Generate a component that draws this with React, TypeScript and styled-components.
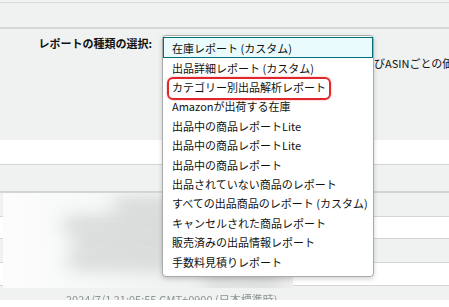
import styled, { createGlobalStyle } from "styled-components";

const GlobalStyle = createGlobalStyle`
    html, body {
        margin: 0;
        padding: 0;
        background: #ffffff;
    }
    body {
        font-family: "Noto Sans CJK JP", "Noto Sans", sans-serif;
        color: #0f1111;
        font-size: 11px;
    }
`

const Page = styled.div`
    position: relative;
    width: 449px;
    height: 307px;
    overflow: hidden;
    background: #ffffff;
`

const TopStrip = styled.div`
    height: 2px;
    background: #f3f3f3;
    border-bottom: 1px solid #d9dbdb;
`

const SubNav = styled.div`
    height: 24px;
    background: #f0f1f1;
    border-bottom: 2px solid #d6d8d8;
`

const Panel = styled.div`
    display: grid;
    grid-template-columns: 162px 212px 1fr;
    height: 104px;
    padding-top: 7px;
    background: #f0f1f1;
`

const Label = styled.div`
    text-align: right;
    padding-right: 10px;
    font-weight: bold;
    line-height: 14px;
    white-space: nowrap;
`

const SelectSlot = styled.div`
    height: 22px;
`

const Description = styled.div`
    padding-top: 20px;
    line-height: 14px;
    white-space: nowrap;
    overflow: hidden;
`

const Band = styled.div<{ $h: number; $gray?: boolean; $line?: number }>`
    display: flex;
    align-items: center;
    height: ${({ $h }) => $h}px;
    background: ${({ $gray }) => ($gray ? "#f0f1f1" : "#ffffff")};
    border-bottom: ${({ $line }) => $line ?? 1}px solid #d3d6d6;
    overflow: hidden;
`

const LastText = styled.span`
    align-self: flex-start;
    margin: 6px 0 0 66px;
    line-height: 14px;
    white-space: nowrap;
    color: #8f9494;
    filter: blur(0.6px);
`

const Blur = styled.div`
    position: absolute;
    left: 3px;
    top: 193px;
    width: 290px;
    height: 95px;
    overflow: hidden;
    display: flex;
    flex-direction: column;
    gap: 6px;
    padding-top: 8px;
    box-sizing: border-box;
    background: linear-gradient(90deg, #fcfcfc 0%, #f7f8f8 30%, #f1f2f2 60%, #f0f0f0 100%);
`

const Smudge = styled.div<{ $x: number; $w: number }>`
    margin-left: ${({ $x }) => $x}px;
    width: ${({ $w }) => $w}px;
    height: 12px;
    border-radius: 6px;
    background: #c9cbcb;
    filter: blur(9px);
`

const BottomFade = styled.div`
    position: absolute;
    left: 0;
    top: 300px;
    width: 449px;
    height: 7px;
    background: #ffffff;
`

const ListBox = styled.div`
    position: absolute;
    left: 162px;
    top: 35px;
    width: 210px;
    padding: 1px 0 5px;
    background: #ffffff;
    border: 1px solid #a9abab;
    border-radius: 4px;
    box-shadow: 0 2px 5px rgba(0, 0, 0, 0.18);
`

const Option = styled.div<{ $active?: boolean }>`
    box-sizing: border-box;
    height: ${({ $active }) => ($active ? 21 : 19.4)}px;
    padding-left: ${({ $active }) => ($active ? 8 : 9)}px;
    display: flex;
    align-items: center;
    white-space: nowrap;
    background: ${({ $active }) => ($active ? "#e9fbfd" : "transparent")};
    border: ${({ $active }) => ($active ? "1px solid #00717c" : "none")};
`

const Callout = styled.div`
    position: absolute;
    left: 4px;
    top: 41px;
    width: 160px;
    height: 19px;
    border: 2px solid #e3252c;
    border-radius: 6px;
    box-shadow: 0 0 2px rgba(200, 30, 30, 0.45);
    pointer-events: none;
`

const options = [
    "在庫レポート (カスタム)",
    "出品詳細レポート (カスタム)",
    "カテゴリー別出品解析レポート",
    "Amazonが出荷する在庫",
    "出品中の商品レポートLite",
    "出品中の商品レポートLite",
    "出品中の商品レポート",
    "出品されていない商品のレポート",
    "すべての出品商品のレポート (カスタム)",
    "キャンセルされた商品レポート",
    "販売済みの出品情報レポート",
    "手数料見積りレポート",
]

const smudges = [
    { x: 110, w: 150 },
    { x: 60, w: 200 },
    { x: 70, w: 200 },
    { x: 65, w: 210 },
    { x: 200, w: 80 },
]

const App = (): JSX.Element => {
    return (
        <>
            <GlobalStyle />
            <Page>
                <TopStrip />
                <SubNav />
                <Panel>
                    <Label>レポートの種類の選択:</Label>
                    <SelectSlot />
                    <Description>びASINごとの価格情報が含まれます</Description>
                </Panel>
                <Band $h={24} />
                <Band $h={26} $gray $line={2} />
                <Band $h={23} $gray />
                <Band $h={21} />
                <Band $h={23} $gray />
                <Band $h={22} />
                <Band $h={20} $gray>
                    <LastText>2024/7/1 21:05:55 GMT+0900 (日本標準時)</LastText>
                </Band>
                <Blur>
                    {smudges.map((s, i) => (
                        <Smudge key={i} $x={s.x} $w={s.w} />
                    ))}
                </Blur>
                <BottomFade />
                <ListBox>
                    {options.map((o, i) => (
                        <Option key={i} $active={i === 0}>{o}</Option>
                    ))}
                    <Callout />
                </ListBox>
            </Page>
        </>
    )
}

export default App;
